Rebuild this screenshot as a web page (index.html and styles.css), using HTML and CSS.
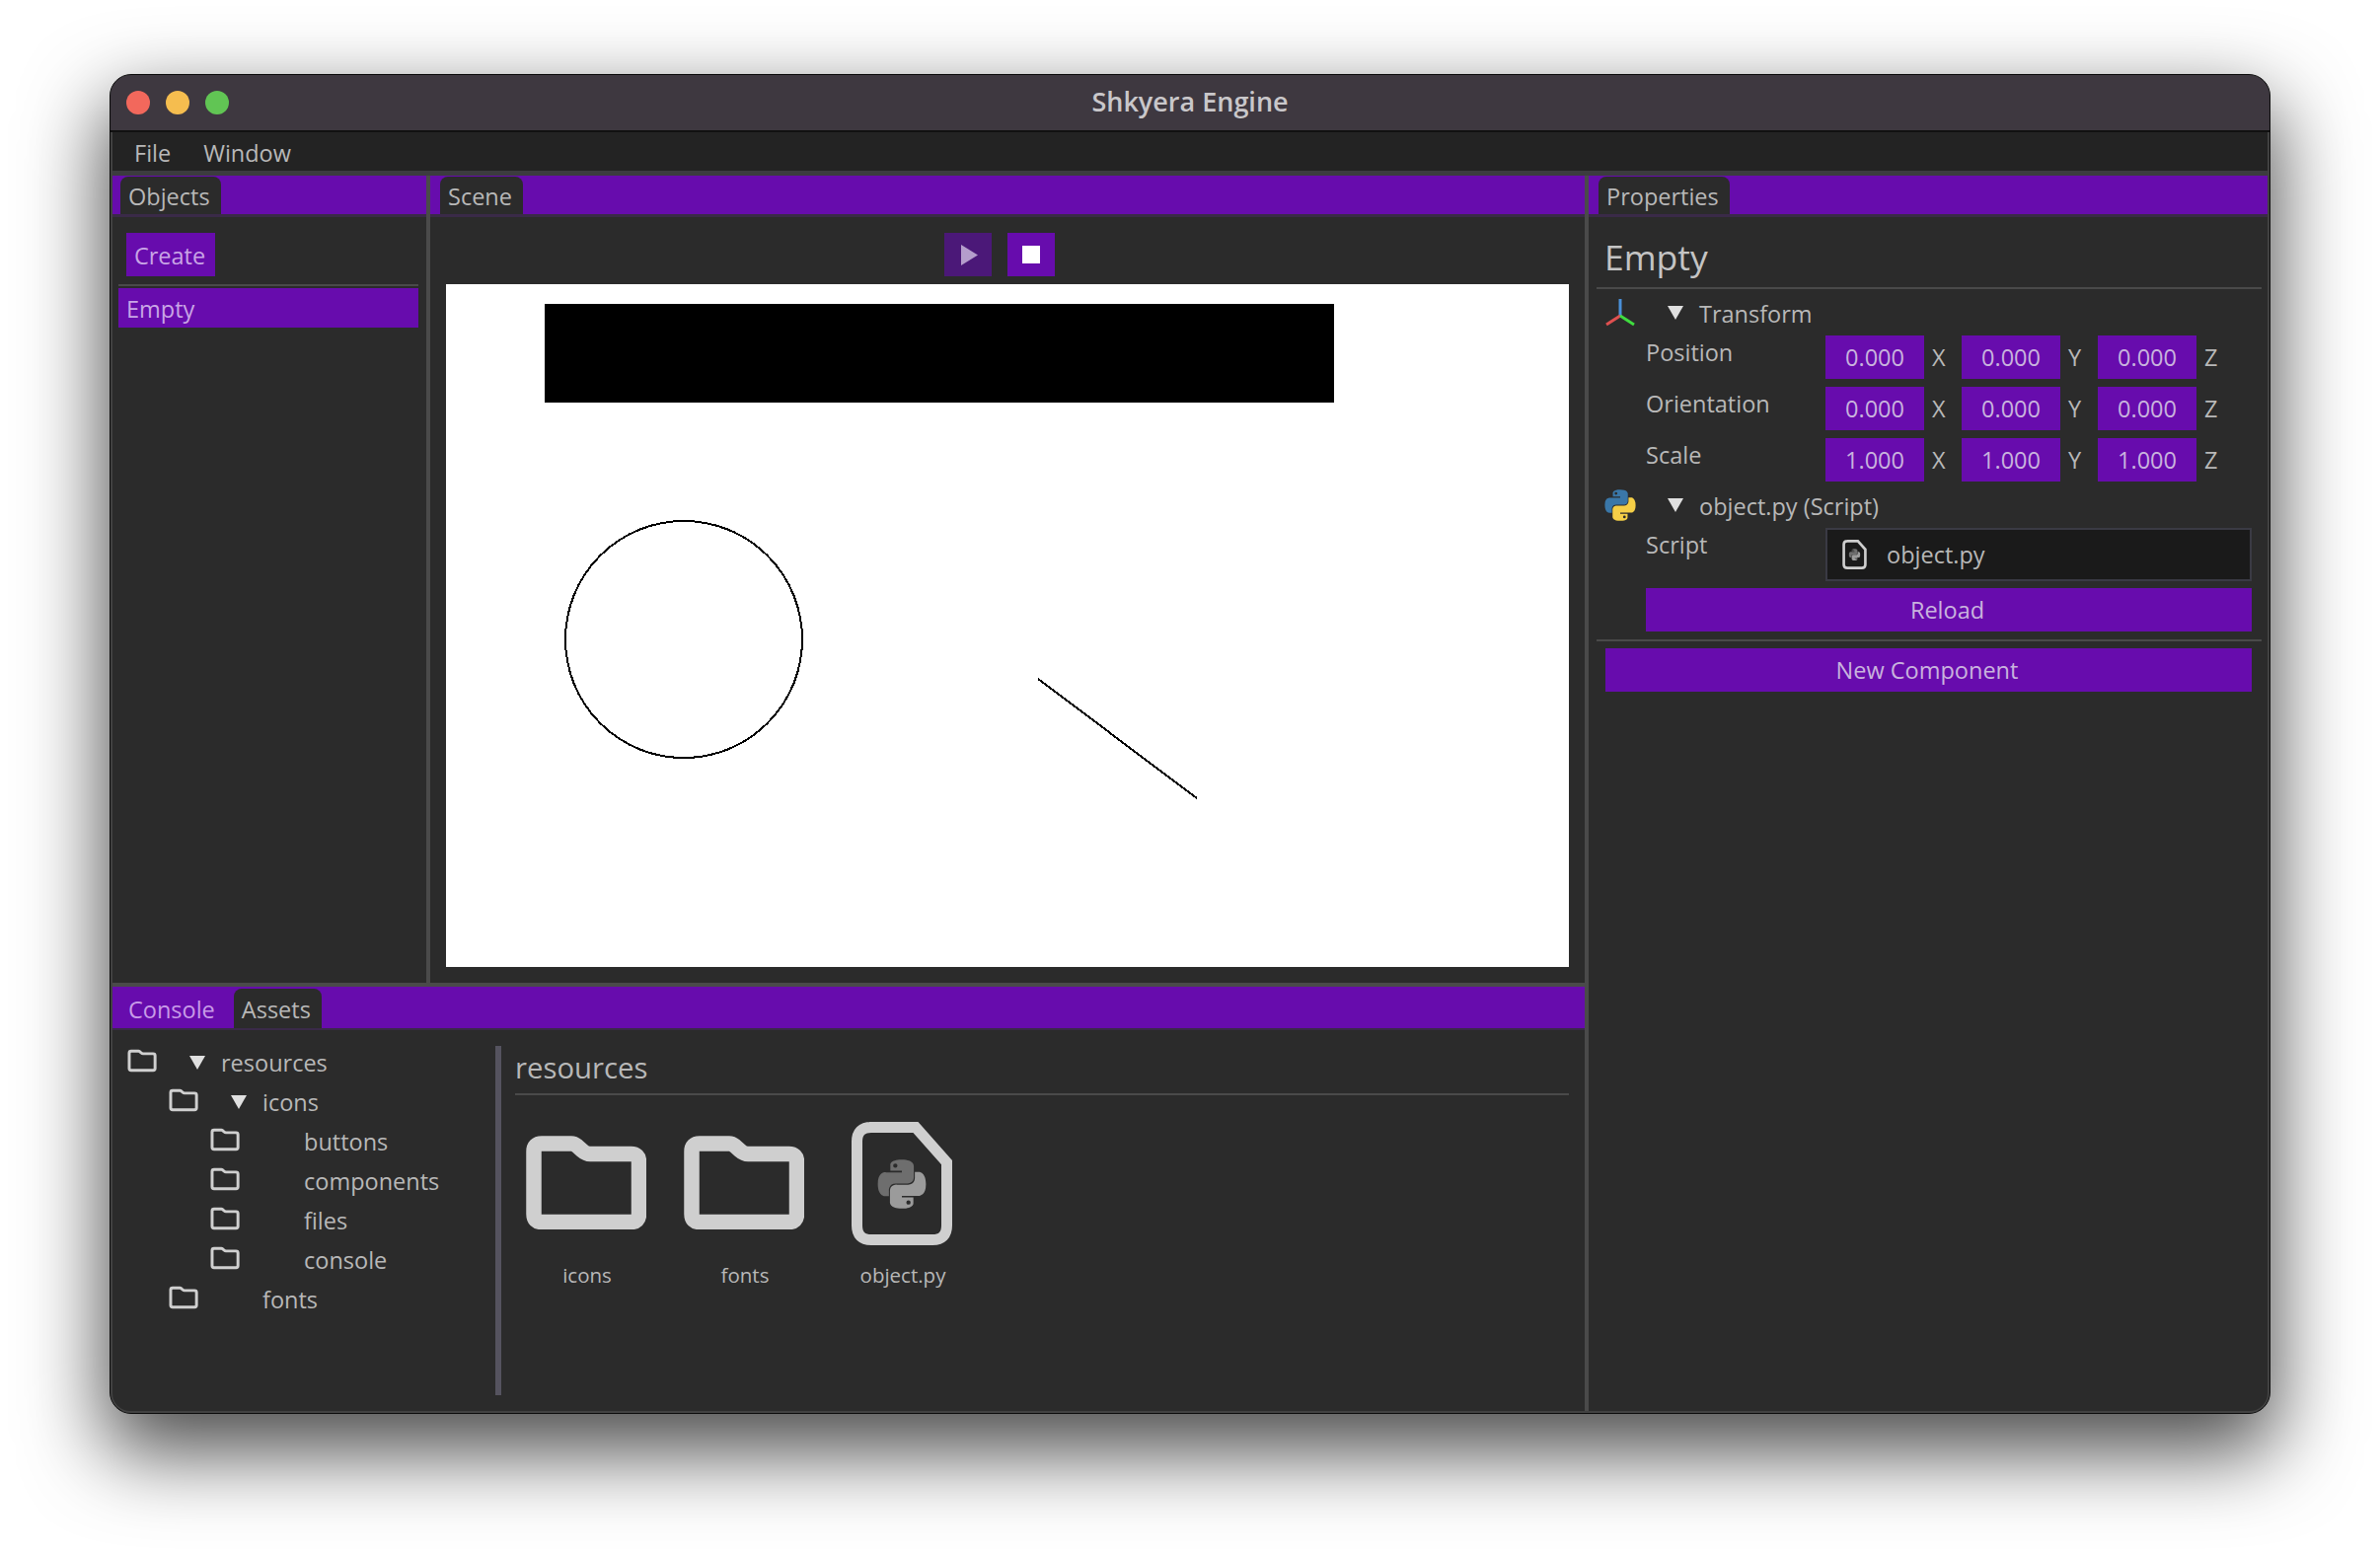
FILE: index.html
```html
<!DOCTYPE html>
<html lang="en">
<head>
    <meta charset="UTF-8">
    <title>Shkyera Engine</title>
    <link rel="stylesheet" href="styles.css">
</head>
<body>

<svg class="defs" width="0" height="0">
    <symbol id="snake" viewBox="0 0 24 24">
        <path fill-rule="evenodd" d="M11.9 0.1C6 0.1 6.4 2.8 6.4 2.8V5.5H12V6.3H4.2C4.2 6.3 0.3 5.8 0.3 11.9C0.3 18 3.7 17.9 3.7 17.9H5.7V15C5.7 15 5.6 11.7 9 11.7H14.6C14.6 11.7 17.8 11.8 17.8 8.6V3.4C17.8 3.4 18.3 0.1 11.9 0.1ZM8.8 2A1 1 0 1 1 8.8 4.1A1 1 0 1 1 8.8 2Z"/>
    </symbol>
    <symbol id="folder" viewBox="0 0 122 95">
        <path d="M16 8H46Q49 8 52 10.5L57 15Q61 18.5 65 18.5H106.5Q114.5 18.5 114.5 26.5V79.5Q114.5 87.5 106.5 87.5H16Q8 87.5 8 79.5V16Q8 8 16 8Z"/>
    </symbol>
    <symbol id="pyfile" viewBox="0 0 102 125">
        <path class="file-outline" d="M18 5.5H65L96.5 41V105Q96.5 119.5 82 119.5H20Q5.5 119.5 5.5 105V20Q5.5 5.5 20 5.5Z"/>
        <use href="#snake" class="snake-dark" x="26" y="38" width="50" height="50"/>
        <use href="#snake" class="snake-light" x="26" y="38" width="50" height="50" transform="rotate(180 51 63)"/>
    </symbol>
</svg>

<div class="window">
    <div class="titlebar">
        <div class="lights">
            <span class="light red"></span>
            <span class="light yellow"></span>
            <span class="light green"></span>
        </div>
        <div class="title">Shkyera Engine</div>
    </div>

    <div class="content">
        <div class="menubar">
            <span>File</span>
            <span>Window</span>
        </div>

        <div class="workspace">
            <div class="left-side">
                <div class="top-row">
                    <section class="panel objects">
                        <div class="tabbar">
                            <div class="tab active">Objects</div>
                        </div>
                        <div class="objects-body">
                            <button class="create-btn">Create</button>
                            <div class="rule"></div>
                            <div class="object-row">Empty</div>
                        </div>
                    </section>

                    <div class="splitter-v"></div>

                    <section class="panel scene">
                        <div class="tabbar">
                            <div class="tab active">Scene</div>
                        </div>
                        <div class="scene-toolbar">
                            <button class="tool-btn dim">
                                <svg class="play-icon" width="17" height="21" viewBox="0 0 17 21"><path d="M0 0L17 10.5L0 21Z"/></svg>
                            </button>
                            <button class="tool-btn">
                                <svg width="18" height="18" viewBox="0 0 18 18"><rect width="18" height="18"/></svg>
                            </button>
                        </div>
                        <svg class="viewport" width="1138" height="692" viewBox="0 0 1138 692">
                            <rect x="100" y="20" width="800" height="100"/>
                            <circle cx="241" cy="360" r="120"/>
                            <line x1="600" y1="400" x2="761" y2="521"/>
                        </svg>
                    </section>
                </div>

                <div class="splitter-h"></div>

                <section class="panel bottom">
                    <div class="tabbar tall">
                        <div class="tab">Console</div>
                        <div class="tab active">Assets</div>
                    </div>
                    <div class="assets-body">
                        <div class="tree">
                            <div class="tree-row">
                                <svg class="tree-folder"><use href="#folder"/></svg>
                                <span class="arrow"></span>
                                <span class="tree-label">resources</span>
                            </div>
                            <div class="tree-row depth1">
                                <svg class="tree-folder"><use href="#folder"/></svg>
                                <span class="arrow"></span>
                                <span class="tree-label">icons</span>
                            </div>
                            <div class="tree-row depth2">
                                <svg class="tree-folder"><use href="#folder"/></svg>
                                <span class="arrow none"></span>
                                <span class="tree-label">buttons</span>
                            </div>
                            <div class="tree-row depth2">
                                <svg class="tree-folder"><use href="#folder"/></svg>
                                <span class="arrow none"></span>
                                <span class="tree-label">components</span>
                            </div>
                            <div class="tree-row depth2">
                                <svg class="tree-folder"><use href="#folder"/></svg>
                                <span class="arrow none"></span>
                                <span class="tree-label">files</span>
                            </div>
                            <div class="tree-row depth2">
                                <svg class="tree-folder"><use href="#folder"/></svg>
                                <span class="arrow none"></span>
                                <span class="tree-label">console</span>
                            </div>
                            <div class="tree-row depth1">
                                <svg class="tree-folder"><use href="#folder"/></svg>
                                <span class="arrow none"></span>
                                <span class="tree-label">fonts</span>
                            </div>
                        </div>
                        <div class="tree-splitter"></div>
                        <div class="browser">
                            <div class="browser-title">resources</div>
                            <div class="browser-items">
                                <div class="asset">
                                    <svg class="asset-icon"><use href="#folder"/></svg>
                                    <div class="asset-name">icons</div>
                                </div>
                                <div class="asset">
                                    <svg class="asset-icon"><use href="#folder"/></svg>
                                    <div class="asset-name">fonts</div>
                                </div>
                                <div class="asset file">
                                    <svg class="asset-icon"><use href="#pyfile"/></svg>
                                    <div class="asset-name">object.py</div>
                                </div>
                            </div>
                        </div>
                    </div>
                </section>
            </div>

            <div class="splitter-v"></div>

            <section class="panel properties">
                <div class="tabbar">
                    <div class="tab active">Properties</div>
                </div>
                <div class="props-body">
                    <div class="props-title">Empty</div>

                    <div class="comp-head">
                        <svg class="comp-icon" viewBox="0 0 30 30">
                            <line class="axis-z" x1="15" y1="1" x2="15" y2="18"/>
                            <line class="axis-x" x1="15" y1="18" x2="1" y2="27"/>
                            <line class="axis-y" x1="15" y1="18" x2="29" y2="27"/>
                        </svg>
                        <span class="arrow"></span>
                        <span class="comp-label">Transform</span>
                    </div>

                    <div class="vec-row">
                        <div class="vec-label">Position</div>
                        <div class="vec-input">0.000</div><div class="axis-name">X</div>
                        <div class="vec-input">0.000</div><div class="axis-name">Y</div>
                        <div class="vec-input">0.000</div><div class="axis-name">Z</div>
                    </div>
                    <div class="vec-row">
                        <div class="vec-label">Orientation</div>
                        <div class="vec-input">0.000</div><div class="axis-name">X</div>
                        <div class="vec-input">0.000</div><div class="axis-name">Y</div>
                        <div class="vec-input">0.000</div><div class="axis-name">Z</div>
                    </div>
                    <div class="vec-row">
                        <div class="vec-label">Scale</div>
                        <div class="vec-input">1.000</div><div class="axis-name">X</div>
                        <div class="vec-input">1.000</div><div class="axis-name">Y</div>
                        <div class="vec-input">1.000</div><div class="axis-name">Z</div>
                    </div>

                    <div class="comp-head script-head">
                        <svg class="comp-icon py-icon" viewBox="0 0 24 24">
                            <use href="#snake" class="snake-blue"/>
                            <use href="#snake" class="snake-yellow" transform="rotate(180 12 12)"/>
                        </svg>
                        <span class="arrow"></span>
                        <span class="comp-label">object.py (Script)</span>
                    </div>

                    <div class="script-row">
                        <div class="vec-label">Script</div>
                        <div class="script-field">
                            <svg class="script-file"><use href="#pyfile"/></svg>
                            <span>object.py</span>
                        </div>
                    </div>

                    <button class="wide-btn reload">Reload</button>
                    <div class="rule props-rule"></div>
                    <button class="wide-btn new-comp">New Component</button>
                </div>
            </section>
        </div>
    </div>
</div>

</body>
</html>
```

FILE: styles.css
```css
body {
    --purple: #670cad;
    margin: 0;
    padding: 75px 0 0 111px;
    height: 1580px;
    box-sizing: border-box;
    background: #fff;
    font-family: "Open Sans", "Noto Sans", sans-serif;
    font-size: 23.5px;
    color: #b8b8b8;
    overflow: hidden;
}

button {
    border: none;
    padding: 0;
    font: inherit;
    color: inherit;
}

.defs {
    position: absolute;
}

.window {
    width: 2190px;
    height: 1358px;
    box-sizing: border-box;
    border: 1px solid #0c0c0c;
    border-radius: 22px;
    overflow: hidden;
    display: flex;
    flex-direction: column;
    background: #2b2b2b;
    box-shadow: 0 34px 82px 5px rgba(0, 0, 0, 0.7);
}

.titlebar {
    height: 56px;
    flex: none;
    display: flex;
    align-items: center;
    justify-content: center;
    position: relative;
    background: #3e3840;
    border-bottom: 2px solid #111;
}

.lights {
    position: absolute;
    left: 16px;
    top: 16px;
    display: flex;
    gap: 16px;
}

.light {
    width: 24px;
    height: 24px;
    border-radius: 50%;
}

.light.red { background: #f2685c; }
.light.yellow { background: #f5bd4f; }
.light.green { background: #61c554; }

.title {
    font-weight: 600;
    font-size: 27px;
    margin-bottom: 3px;
    color: #c9c7ca;
}

.content {
    flex: 1;
    min-height: 0;
    display: flex;
    flex-direction: column;
    border: 2px solid #414141;
    border-top: none;
    border-radius: 0 0 20px 20px;
}

.menubar {
    height: 37px;
    flex: none;
    display: flex;
    align-items: center;
    gap: 33px;
    padding: 2px 0 0 22px;
    background: #232323;
    border-bottom: 5px solid #3c3c3f;
}

.workspace {
    flex: 1;
    min-height: 0;
    display: flex;
}

.left-side {
    width: 1492px;
    flex: none;
    display: flex;
    flex-direction: column;
}

.top-row {
    height: 818px;
    flex: none;
    display: flex;
}

.panel {
    display: flex;
    flex-direction: column;
    min-width: 0;
}

.objects {
    width: 318px;
    flex: none;
}

.scene {
    flex: 1;
}

.bottom {
    flex: 1;
    min-height: 0;
}

.properties {
    flex: 1;
}

.splitter-v {
    width: 4px;
    flex: none;
    background: #4a4a4a;
}

.splitter-h {
    height: 4px;
    flex: none;
    background: #4a4a4a;
}

.tabbar {
    height: 39px;
    flex: none;
    display: flex;
    align-items: flex-end;
    padding-left: 10px;
    background: var(--purple);
    border-bottom: 3px solid #3a2a48;
}

.objects .tabbar {
    padding-left: 8px;
}

.tabbar.tall {
    height: 42px;
    padding-left: 0;
    border-bottom-width: 2px;
}

.tab {
    height: 36px;
    padding: 2px 11px 0 8px;
    display: flex;
    align-items: center;
    border-radius: 8px 8px 0 0;
    color: #c89be8;
}

.tab.active {
    background: #2b2b2b;
    color: #b8b8b8;
}

.tall .tab {
    height: 38px;
}

.bottom .tab:first-child {
    padding-left: 16px;
    margin-right: 8px;
}

.objects-body {
    padding: 16px 8px 0 6px;
}

.create-btn {
    display: block;
    height: 44px;
    width: 90px;
    margin-left: 8px;
    padding: 2px 2px 0 0;
    background: var(--purple);
    color: #c9a5e6;
}

.rule {
    height: 2px;
    background: #4a4a4a;
}

.objects-body .rule {
    margin-top: 8px;
}

.object-row {
    height: 38px;
    margin-top: 2px;
    padding: 2px 0 0 8px;
    display: flex;
    align-items: center;
    background: var(--purple);
    color: #c9a5e6;
}

.scene-toolbar {
    height: 68px;
    flex: none;
    box-sizing: border-box;
    padding: 16px 0 0 521px;
    display: flex;
    gap: 16px;
}

.tool-btn {
    width: 48px;
    height: 44px;
    display: flex;
    align-items: center;
    justify-content: center;
    background: var(--purple);
}

.tool-btn svg {
    fill: #fff;
}

.tool-btn.dim {
    background: #4b1878;
}

.tool-btn.dim svg {
    fill: #b59dcc;
}

.play-icon {
    margin-left: 3px;
}

.viewport {
    display: block;
    margin-left: 16px;
    background: #fff;
}

.viewport rect {
    fill: #000;
}

.viewport circle,
.viewport line {
    fill: none;
    stroke: #000;
    stroke-width: 2;
    shape-rendering: crispEdges;
}

.assets-body {
    flex: 1;
    min-height: 0;
    display: flex;
    padding: 16px 0 16px 0;
}

.tree {
    width: 388px;
    flex: none;
    box-sizing: border-box;
    padding-left: 15px;
}

.tree-row {
    height: 40px;
    display: flex;
    align-items: center;
}

.tree-row.depth1 {
    padding-left: 42px;
}

.tree-row.depth2 {
    padding-left: 84px;
}

.tree-folder {
    width: 30px;
    height: 24px;
    flex: none;
    margin-bottom: 10px;
    fill: none;
    stroke: #cfcfcf;
    stroke-width: 12;
}

.tree-label {
    margin-bottom: 7px;
}

.arrow {
    width: 0;
    height: 0;
    margin: 0 16px 0 33px;
    border-left: 8px solid transparent;
    border-right: 8px solid transparent;
    border-top: 14px solid #e0e0e0;
    flex: none;
}

.tree-row .arrow {
    margin-bottom: 7px;
}

.arrow.none {
    border-top-color: transparent;
}

.tree-splitter {
    width: 6px;
    flex: none;
    background: #55535f;
}

.browser {
    flex: 1;
    padding: 0 16px 0 14px;
    min-width: 0;
}

.browser-title {
    height: 43px;
    padding-bottom: 5px;
    font-size: 29.3px;
    display: flex;
    align-items: center;
    border-bottom: 2px solid #4a4a4a;
}

.browser-items {
    display: flex;
    padding: 27px 0 0 11px;
}

.asset {
    width: 122px;
    margin-right: 38px;
    display: flex;
    flex-direction: column;
    align-items: center;
}

.asset-icon {
    width: 122px;
    height: 95px;
    margin-top: 14px;
    fill: none;
    stroke: #cfcfcf;
    stroke-width: 15.5;
}

.asset-name {
    font-size: 20.5px;
    line-height: 28px;
    margin-top: 32px;
    padding-left: 2px;
}

.asset.file {
    width: 102px;
    margin-left: 10px;
}

.asset.file .asset-icon {
    width: 102px;
    height: 125px;
    margin-top: 0;
    stroke-width: 11;
}

.asset.file .asset-name {
    margin-top: 16px;
    white-space: nowrap;
}

.file-outline {
    fill: none;
    stroke: #cfcfcf;
    stroke-width: 11;
}

.snake-dark {
    fill: #6e6e6e;
    stroke: none;
}

.snake-light {
    fill: #9b9b9b;
    stroke: none;
}

.props-body {
    padding: 0 6px 0 8px;
}

.props-title {
    height: 63px;
    padding: 8px 0 0 8px;
    display: flex;
    align-items: center;
    font-size: 35.5px;
    color: #c4c4c4;
    border-bottom: 2px solid #4a4a4a;
}

.comp-head {
    height: 47px;
    display: flex;
    align-items: center;
    padding-left: 9px;
}

.comp-icon {
    width: 30px;
    height: 30px;
    flex: none;
}

.comp-icon line {
    stroke-width: 3;
}

.py-icon {
    width: 32px;
    height: 32px;
    margin: 0 -1px;
}

.comp-label {
    margin-top: 2px;
}

.axis-z { stroke: #4a90d9; }
.axis-x { stroke: #e05050; }
.axis-y { stroke: #3fdc3f; }

.snake-blue { fill: #3a77a8; }
.snake-yellow { fill: #f5cf47; }

.vec-row {
    height: 44px;
    margin-bottom: 8px;
    display: flex;
    padding-left: 50px;
}

.vec-label {
    width: 182px;
    flex: none;
    padding-top: 1px;
}

.vec-input {
    width: 100px;
    height: 44px;
    display: flex;
    align-items: center;
    justify-content: center;
    background: var(--purple);
    color: #c9b3de;
}

.axis-name {
    width: 38px;
    display: flex;
    align-items: center;
    padding-left: 8px;
    box-sizing: border-box;
}

.script-head {
    margin-top: -8px;
}

.script-row {
    height: 55px;
    display: flex;
    padding-left: 50px;
}

.script-field {
    width: 432px;
    height: 54px;
    box-sizing: border-box;
    display: flex;
    align-items: center;
    gap: 20px;
    padding-left: 15px;
    background: #1a1a1a;
    border: 2px solid #3a3a44;
}

.script-file {
    width: 25px;
    height: 30px;
    flex: none;
}

.wide-btn {
    display: block;
    height: 44px;
    padding-right: 3px;
    background: var(--purple);
    color: #c9b3de;
}

.reload {
    width: 614px;
    margin: 6px 0 0 50px;
}

.props-rule {
    margin-top: 8px;
}

.new-comp {
    width: 655px;
    margin: 7px 0 0 9px;
}
```
